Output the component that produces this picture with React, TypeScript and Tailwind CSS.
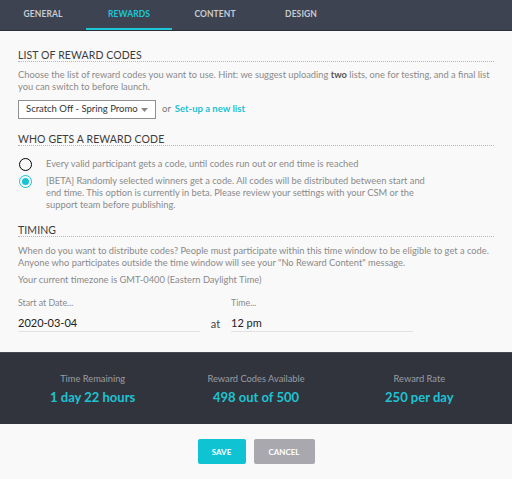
import React from "react";

const font = { fontFamily: "Lato, 'Open Sans', sans-serif" };

function Heading({ children }: { children: React.ReactNode }) {
  return (
    <div className="border-b border-dotted border-[#b8b8b8] text-[10.5px] leading-[12px] tracking-[0.1px] text-[#3c3c3c]">
      {children}
    </div>
  );
}

export default function App() {
  const tabs = ["GENERAL", "REWARDS", "CONTENT", "DESIGN"];
  return (
    <div className="w-[512px] h-[479px] bg-[#f9f9f9] overflow-hidden" style={font}>
      <div className="flex h-[31px] bg-[#3d4350] border-b border-[#2a2e37]">
        {tabs.map((t) => (
          <div
            key={t}
            className={`w-[86px] flex items-center justify-center text-[8.5px] font-bold tracking-[0.1px] ${
              t === "REWARDS" ? "text-[#1dc7d6] border-b-2 border-[#1dc7d6]" : "text-[#c9ccd2] border-b-2 border-transparent"
            }`}
          >
            {t}
          </div>
        ))}
      </div>

      <div className="px-[18px] pt-[18px] h-[321px]">
        <Heading>LIST OF REWARD CODES</Heading>
        <p className="mt-[7px] text-[9.3px] leading-[12px] text-[#8a8a8a]">
          Choose the list of reward codes you want to use. Hint: we suggest uploading <span className="font-bold text-[#555]">two</span> lists, one for testing, and a final list you can switch to before launch.
        </p>
        <div className="mt-[7px] flex items-center">
          <div className="w-[138px] h-[19px] border border-[#8f8f8f] bg-white flex items-center px-[7px] text-[9.5px] text-[#333]">
            <span className="flex-1">Scratch Off - Spring Promo</span>
            <svg width="7" height="4" viewBox="0 0 7 4"><path d="M0 0h7L3.5 4z" fill="#888" /></svg>
          </div>
          <span className="ml-[6px] text-[9.5px] text-[#777]">or</span>
          <span className="ml-[4px] text-[9.5px] font-bold text-[#1dc1d2]">Set-up a new list</span>
        </div>

        <div className="mt-[14px]">
          <Heading>WHO GETS A REWARD CODE</Heading>
        </div>
        <div className="mt-[12px] flex items-center h-[12px]">
          <div className="w-[13px] h-[13px] rounded-full border-[1.5px] border-black ml-[1px] shrink-0" />
          <span className="ml-[14px] text-[9.3px] leading-[12px] text-[#8a8a8a]">Every valid participant gets a code, until codes run out or end time is reached</span>
        </div>
        <div className="mt-[5px] flex items-start">
          <div className="w-[13px] h-[13px] rounded-full border-[1.5px] border-[#19c3d3] ml-[1px] flex items-center justify-center shrink-0">
            <div className="w-[7px] h-[7px] rounded-full bg-[#19c3d3]" />
          </div>
          <p className="ml-[14px] w-[382px] text-[9.3px] leading-[12px] text-[#8a8a8a]">
            [BETA] Randomly selected winners get a code. All codes will be distributed between start and end time. This option is currently in beta. Please review your settings with your CSM or the support team before publishing.
          </p>
        </div>

        <div className="mt-[13px]">
          <Heading>TIMING</Heading>
        </div>
        <p className="mt-[8px] text-[9.3px] leading-[12px] text-[#8a8a8a]">
          When do you want to distribute codes? People must participate within this time window to be eligible to get a code. Anyone who participates outside the time window will see your "No Reward Content" message.
        </p>
        <p className="mt-[5px] text-[9.3px] leading-[12px] text-[#8a8a8a]">Your current timezone is GMT-0400 (Eastern Daylight Time)</p>

        <div className="mt-[11px] flex items-end">
          <div className="w-[182px]">
            <div className="text-[8.8px] leading-[12px] text-[#8a8a8a]">Start at Date...</div>
            <div className="mt-[7px] pb-[1px] border-b border-[#e2e2e2] text-[11px] leading-[14px] text-[#222]">2020-03-04</div>
          </div>
          <span className="w-[31px] text-center pb-[1px] text-[11px] leading-[14px] text-[#444]">at</span>
          <div className="w-[182px]">
            <div className="text-[8.8px] leading-[12px] text-[#8a8a8a]">Time...</div>
            <div className="mt-[7px] pb-[1px] border-b border-[#e2e2e2] text-[11px] leading-[14px] text-[#222]">12 pm</div>
          </div>
        </div>
      </div>

      <div className="h-[72px] bg-[#31343c] border-t border-[#454852] flex items-center px-[11px]">
        {[
          ["Time Remaining", "1 day 22 hours"],
          ["Reward Codes Available", "498 out of 500"],
          ["Reward Rate", "250 per day"],
        ].map(([l, v]) => (
          <div key={l} className="flex-1 flex flex-col items-center">
            <div className="text-[9.3px] leading-[12px] text-[#9a9da4]">{l}</div>
            <div className="mt-[4px] text-[13px] leading-[16px] font-bold text-[#1ec3d3]">{v}</div>
          </div>
        ))}
      </div>

      <div className="flex justify-center gap-[8px] mt-[15px]">
        <button className="w-[48px] h-[25px] rounded-[2px] bg-[#10c3d3] text-white text-[8px] font-bold">SAVE</button>
        <button className="w-[61px] h-[25px] rounded-[2px] bg-[#a9a8ae] text-white text-[8px] font-bold">CANCEL</button>
      </div>
    </div>
  );
}
